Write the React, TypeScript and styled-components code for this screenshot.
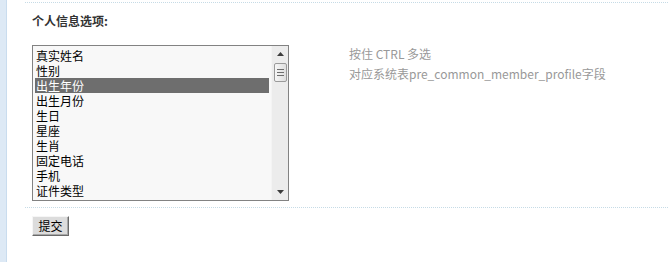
import React from 'react';
import styled, { createGlobalStyle } from 'styled-components';

const GlobalStyle = createGlobalStyle`
  html, body {
    margin: 0;
    padding: 0;
    background: #fff;
  }
  body {
    font-family: "Noto Sans CJK SC", "DejaVu Sans", sans-serif;
    font-size: 12px;
    color: #333;
  }
`;

const Page = styled.div`
  display: flex;
  width: 668px;
  height: 262px;
  overflow: hidden;
`;

const SideStrip = styled.div`
  width: 6px;
  background: #dde9f5;
  border-right: 1px solid #c9dcee;
  flex-shrink: 0;
`;

const Main = styled.div`
  flex: 1;
  padding-left: 18px;
  padding-top: 2px;
`;

const Section = styled.div`
  border-top: 1px dotted #c6dbe6;
  padding-left: 7px;
`;

const Title = styled.h3`
  margin: 0;
  padding-top: 9px;
  font-size: 12px;
  line-height: 18px;
  font-weight: bold;
  color: #333;
`;

const FieldRow = styled.div`
  display: flex;
  align-items: flex-start;
  margin-top: 15px;
  padding-bottom: 6px;
`;

const ListBox = styled.div`
  display: flex;
  width: 255px;
  height: 154px;
  border: 1px solid #828282;
  background: #f8f8f8;
`;

const Options = styled.ul`
  list-style: none;
  margin: 0;
  padding: 2px 2px 0 2px;
  flex: 1;
  overflow: hidden;
`;

const Option = styled.li<{ $selected?: boolean }>`
  height: 15px;
  line-height: 15px;
  padding-left: 1px;
  font-size: 12px;
  overflow: hidden;
  color: ${(p) => (p.$selected ? '#fff' : '#000')};
  background: ${(p) => (p.$selected ? '#6e6e6e' : 'transparent')};
  white-space: nowrap;
`;

const ScrollBar = styled.div`
  width: 16px;
  display: flex;
  flex-direction: column;
  align-items: center;
  background: #ececec;
  border-left: 1px solid #f4f4f4;
`;

const ArrowButton = styled.div`
  height: 16px;
  width: 100%;
  display: flex;
  align-items: center;
  justify-content: center;
`;

const Thumb = styled.div`
  width: 13px;
  height: 19px;
  margin-top: 1px;
  border: 1px solid #9a9a9a;
  border-radius: 2px;
  background: linear-gradient(to right, #f6f6f6, #dedede);
  display: flex;
  flex-direction: column;
  align-items: center;
  justify-content: center;
  gap: 2px;
  box-sizing: border-box;
`;

const Grip = styled.span`
  width: 7px;
  height: 1px;
  background: #6d6d6d;
`;

const Track = styled.div`
  flex: 1;
`;

const Hints = styled.div`
  margin-left: 60px;
  margin-top: -1px;
  color: #999;
  font-size: 12px;
  line-height: 20px;
`;

const Footer = styled.div`
  border-top: 1px dotted #c6dbe6;
  padding: 8px 0 0 7px;
`;

const SubmitButton = styled.button`
  font-family: "Noto Sans CJK SC", sans-serif;
  font-size: 12px;
  line-height: 14px;
  height: 20px;
  width: 37px;
  padding: 0;
  color: #000;
  background: #dcdcdc;
  border: 1px solid;
  border-color: #f6f6f6 #6a6a6a #6a6a6a #f6f6f6;
  box-shadow: inset -1px -1px 0 #a8a8a8;
  cursor: pointer;
`;

const options = [
  '真实姓名',
  '性别',
  '出生年份',
  '出生月份',
  '生日',
  '星座',
  '生肖',
  '固定电话',
  '手机',
  '证件类型',
];

const UpArrow = () => (
  <svg width="7" height="4" viewBox="0 0 7 4">
    <path d="M3.5 0 L7 4 L0 4 Z" fill="#3c3c3c" />
  </svg>
);

const DownArrow = () => (
  <svg width="7" height="4" viewBox="0 0 7 4">
    <path d="M0 0 L7 0 L3.5 4 Z" fill="#3c3c3c" />
  </svg>
);

const App: React.FC = () => {
  return (
    <>
      <GlobalStyle />
      <Page>
        <SideStrip />
        <Main>
          <Section>
            <Title>个人信息选项:</Title>
            <FieldRow>
              <ListBox>
                <Options>
                  {options.map((o) => (
                    <Option key={o} $selected={o === '出生年份'}>
                      {o}
                    </Option>
                  ))}
                </Options>
                <ScrollBar>
                  <ArrowButton>
                    <UpArrow />
                  </ArrowButton>
                  <Thumb>
                    <Grip />
                    <Grip />
                    <Grip />
                  </Thumb>
                  <Track />
                  <ArrowButton>
                    <DownArrow />
                  </ArrowButton>
                </ScrollBar>
              </ListBox>
              <Hints>
                <div>按住 CTRL 多选</div>
                <div>对应系统表pre_common_member_profile字段</div>
              </Hints>
            </FieldRow>
          </Section>
          <Footer>
            <SubmitButton>提交</SubmitButton>
          </Footer>
        </Main>
      </Page>
    </>
  );
};

export default App;
